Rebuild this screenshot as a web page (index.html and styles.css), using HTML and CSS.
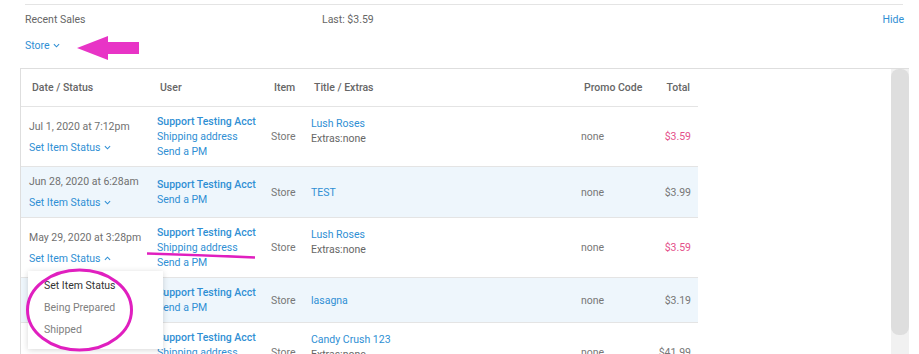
FILE: index.html
```html
<!DOCTYPE html>
<html lang="en">
<head>
    <meta charset="UTF-8">
    <meta name="viewport" content="width=device-width, initial-scale=1.0">
    <title>Recent Sales</title>
    <link rel="stylesheet" href="styles.css">
</head>
<body>

    <div class="page">
        <div class="summary">
            <span class="summary-label">Recent Sales</span>
            <span class="summary-last">Last: $3.59</span>
            <a class="link hide">Hide</a>
        </div>
        <div class="filter">
            <a class="link">Store <svg class="chev" viewBox="0 0 8 5"><polyline points="1,1 4,4 7,1"/></svg></a>
        </div>

        <div class="sales">
            <div class="sales-table">
                <table>
                    <colgroup>
                        <col style="width: 128px">
                        <col style="width: 114px">
                        <col style="width: 40px">
                        <col style="width: 270px">
                        <col style="width: 75px">
                        <col style="width: 50px">
                    </colgroup>
                    <thead>
                        <tr>
                            <th>Date / Status</th>
                            <th>User</th>
                            <th>Item</th>
                            <th>Title / Extras</th>
                            <th>Promo Code</th>
                            <th class="total">Total</th>
                        </tr>
                    </thead>
                    <tbody>
                        <tr>
                            <td>
                                <div class="date">Jul 1, 2020 at 7:12pm</div>
                                <a class="link status">Set Item Status <svg class="chev" viewBox="0 0 8 5"><polyline points="1,1 4,4 7,1"/></svg></a>
                            </td>
                            <td>
                                <a class="link user">Support Testing Acct</a>
                                <a class="link">Shipping address</a>
                                <a class="link">Send a PM</a>
                            </td>
                            <td class="muted">Store</td>
                            <td>
                                <div class="title-block">
                                    <a class="link">Lush Roses</a>
                                    <div class="extras">Extras:none</div>
                                </div>
                            </td>
                            <td class="muted">none</td>
                            <td class="total pink">$3.59</td>
                        </tr>
                        <tr>
                            <td>
                                <div class="date">Jun 28, 2020 at 6:28am</div>
                                <a class="link status">Set Item Status <svg class="chev" viewBox="0 0 8 5"><polyline points="1,1 4,4 7,1"/></svg></a>
                            </td>
                            <td>
                                <a class="link user">Support Testing Acct</a>
                                <a class="link">Send a PM</a>
                            </td>
                            <td class="muted">Store</td>
                            <td><a class="link">TEST</a></td>
                            <td class="muted">none</td>
                            <td class="total muted">$3.99</td>
                        </tr>
                        <tr>
                            <td>
                                <div class="date">May 29, 2020 at 3:28pm</div>
                                <div class="status-wrap">
                                    <a class="link status">Set Item Status <svg class="chev" viewBox="0 0 8 5"><polyline points="1,4 4,1 7,4"/></svg></a>
                                    <div class="menu">
                                        <div class="menu-item current">Set Item Status</div>
                                        <div class="menu-item">Being Prepared</div>
                                        <div class="menu-item">Shipped</div>
                                    </div>
                                </div>
                            </td>
                            <td>
                                <a class="link user">Support Testing Acct</a>
                                <a class="link">Shipping address</a>
                                <a class="link">Send a PM</a>
                            </td>
                            <td class="muted">Store</td>
                            <td>
                                <div class="title-block">
                                    <a class="link">Lush Roses</a>
                                    <div class="extras">Extras:none</div>
                                </div>
                            </td>
                            <td class="muted">none</td>
                            <td class="total pink">$3.59</td>
                        </tr>
                        <tr>
                            <td>
                                <div class="date">May 12, 2020 at 1:05pm</div>
                            </td>
                            <td>
                                <a class="link user">Support Testing Acct</a>
                                <a class="link">Send a PM</a>
                            </td>
                            <td class="muted">Store</td>
                            <td><a class="link">lasagna</a></td>
                            <td class="muted">none</td>
                            <td class="total muted">$3.19</td>
                        </tr>
                        <tr>
                            <td>
                                <div class="date">May 2, 2020 at 9:41am</div>
                                <a class="link status">Set Item Status <svg class="chev" viewBox="0 0 8 5"><polyline points="1,1 4,4 7,1"/></svg></a>
                            </td>
                            <td>
                                <a class="link user">Support Testing Acct</a>
                                <a class="link">Shipping address</a>
                                <a class="link">Send a PM</a>
                            </td>
                            <td class="muted">Store</td>
                            <td>
                                <div class="title-block">
                                    <a class="link">Candy Crush 123</a>
                                    <div class="extras">Extras:none</div>
                                </div>
                            </td>
                            <td class="muted">none</td>
                            <td class="total muted">$41.99</td>
                        </tr>
                    </tbody>
                </table>
            </div>
            <div class="scrollbar"><div class="thumb"></div></div>
        </div>

        <!-- pink markup drawn over the screenshot -->
        <svg class="marks" viewBox="0 0 919 354">
            <polygon points="77,48 108,36 108,42 139,42 139,54 108,54 108,60"/>
            <path d="M147 253.5 Q200 255 255 257.5"/>
            <ellipse cx="79.5" cy="310" rx="52" ry="40"/>
        </svg>
    </div>

</body>
</html>
```

FILE: styles.css
```css
body {
    margin: 0;
    font-family: Roboto, "Liberation Sans", Arial, sans-serif;
    font-size: 10.5px;
    color: #707070;
    background: #fff;
}
.page {
    position: relative;
    width: 919px;
    height: 354px;
    overflow: hidden;
}
.link {
    color: #2f8fd4;
    cursor: pointer;
    display: block;
}
.chev {
    width: 7px;
    height: 5px;
    margin-left: 1px;
    vertical-align: 1px;
}
.chev polyline {
    fill: none;
    stroke: #2f8fd4;
    stroke-width: 1.2;
}
/* Summary row */
.summary {
    margin: 4px 0 0 25px;
    width: 878px;
    border-top: 1px solid #e4e4e4;
    padding-top: 7px;
    line-height: 15px;
    display: grid;
    grid-template-columns: 297px 1fr auto;
    color: #666;
}
.hide {
    margin-right: -1px;
}
.filter {
    margin: 10px 0 0 25px;
    line-height: 15px;
}
.filter .link {
    display: inline-block;
    padding-top: 1px;
}
/* Sales table */
.sales {
    margin: 15px 0 0 20px;
    width: 888px;
    height: 290px;
    border-top: 1px solid #dedede;
    border-left: 1px solid #dedede;
    display: flex;
}
.sales-table {
    flex: 1;
}
table {
    width: 677px;
    border-collapse: collapse;
    table-layout: fixed;
    line-height: 15px;
}
th {
    text-align: left;
    font-weight: 500;
    color: #666;
    height: 37px;
    padding: 0 0 0 11px;
    border-bottom: 1px solid #e4e4e4;
}
td {
    padding: 7px 0 7px 8px;
    vertical-align: middle;
    border-bottom: 1px solid #e4e4e4;
    white-space: nowrap;
}
tbody tr:nth-child(even) td {
    background: #eef6fc;
}
th.total,
td.total {
    text-align: right;
    padding-right: 7px;
}
th.total {
    padding-right: 8px;
}
.muted {
    color: #777;
}
.pink {
    color: #e4508b;
}
.user {
    font-weight: 500;
}
.status {
    display: inline-block;
    margin-top: 6px;
}
.title-block {
    margin-bottom: 11px;
}
.extras {
    color: #666;
}
/* Status dropdown */
.status-wrap {
    position: relative;
}
.menu {
    position: absolute;
    left: -1px;
    top: 26px;
    width: 135px;
    padding: 4px 0 8px;
    background: #fff;
    box-shadow: 0 1px 6px rgba(0, 0, 0, 0.16);
    z-index: 2;
}
.menu-item {
    padding-left: 16px;
    line-height: 22px;
    color: #808080;
}
.menu-item.current {
    color: #333;
}
/* Scrollbar */
.scrollbar {
    width: 18px;
    background: #f1f1f1;
}
.thumb {
    height: 266px;
    border-radius: 8px;
    background: #dedede;
}
/* Annotations */
.marks {
    position: absolute;
    left: 0;
    top: 0;
    width: 919px;
    height: 354px;
    pointer-events: none;
    z-index: 5;
}
.marks polygon {
    fill: #e834c6;
}
.marks path,
.marks ellipse {
    fill: none;
    stroke: #e01fbf;
    stroke-width: 3;
}
.marks path {
    stroke-width: 2.5;
}
```
